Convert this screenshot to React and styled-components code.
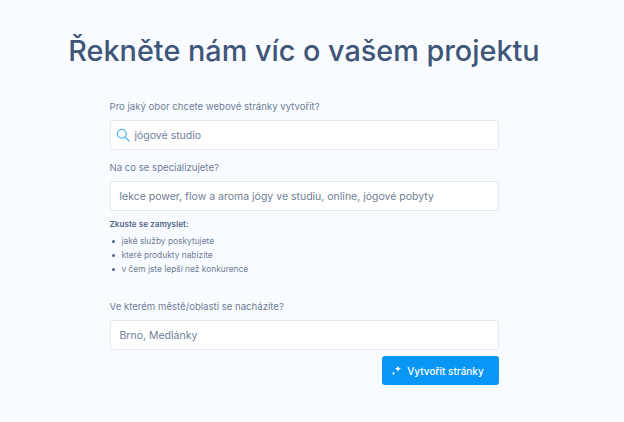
import React from "react";
import styled, { createGlobalStyle } from "styled-components";

const Global = createGlobalStyle`
  html, body { margin: 0; padding: 0; background: #f8fbff; }
  body { font-family: "Inter", "Lato", sans-serif; }
`;

const Page = styled.main`
  width: 624px;
  height: 422px;
  overflow: hidden;
  box-sizing: border-box;
  padding: 30px 16px 0 0;
  background: #f8fbff;
  display: flex;
  flex-direction: column;
  align-items: center;
`;

const Title = styled.h1`
  margin: 0 0 27px;
  font-size: 28.8px;
  line-height: 42px;
  font-weight: 500;
  color: #3f5679;
  white-space: nowrap;
`;

const Form = styled.form`
  width: 389px;
  display: flex;
  flex-direction: column;
`;

const Label = styled.label`
  display: block;
  height: 16px;
  line-height: 16px;
  font-size: 9.6px;
  color: #6f7e96;
  margin-bottom: 5px;
`;

const Field = styled.div`
  box-sizing: border-box;
  height: 30px;
  background: #fff;
  border: 1px solid #e4eaf3;
  border-radius: 3px;
  display: flex;
  align-items: center;
  gap: 5px;
  padding: 0 ${(p) => (p.$icon ? 5 : 9)}px;
  font-size: 10.5px;
  color: #6f7e96;
  margin-bottom: ${(p) => p.$after || 0}px;
`;

const Hint = styled.div`
  font-size: 8.2px;
  line-height: 12px;
  font-weight: 600;
  color: #55688a;
  margin: 7px 0 4px;
`;

const List = styled.ul`
  margin: 0 0 23px;
  padding: 0 0 0 12px;
  list-style: none;
`;

const Item = styled.li`
  position: relative;
  font-size: 8.4px;
  line-height: 14px;
  color: #6f7e96;
  &::before {
    content: "";
    position: absolute;
    left: -10px;
    top: 6px;
    width: 3px;
    height: 3px;
    border-radius: 50%;
    background: #4d628a;
  }
`;

const Actions = styled.div`
  display: flex;
  justify-content: flex-end;
  margin-top: 6px;
`;

const Button = styled.button`
  box-sizing: border-box;
  width: 117px;
  height: 29px;
  border: 0;
  border-radius: 3px;
  background: #0996f5;
  color: #fff;
  font: 500 10px "Inter", sans-serif;
  display: flex;
  align-items: center;
  justify-content: center;
  gap: 5px;
  padding: 0 5px 0 0;
`;

const SearchIcon = () => (
  <svg width="14" height="14" viewBox="0 0 14 14" fill="none" stroke="#55b4ef" strokeWidth="1.3" strokeLinecap="round">
    <circle cx="5.8" cy="5.8" r="4.4" />
    <path d="M9 9l4 4" />
  </svg>
);

const SparkIcon = () => (
  <svg width="11" height="11" viewBox="0 0 11 11" fill="#fff">
    <path d="M7 .5c.3 2 1.2 2.900 3.400 3.300C8.200 4.200 7.300 5.100 7 7.200 6.700 5.100 5.800 4.200 3.600 3.800 5.800 3.400 6.700 2.500 7 .5z" />
    <path d="M2.500 6.200c.2 1.300.7 1.800 2 2.100-1.300.3-1.800.8-2 2.100-.2-1.300-.7-1.800-2-2.100 1.300-.3 1.800-.8 2-2.100z" />
  </svg>
);

export default function App() {
  return (
    <Page>
      <Global />
      <Title>Řekněte nám víc o vašem projektu</Title>
      <Form onSubmit={(e) => e.preventDefault()}>
        <Label>Pro jaký obor chcete webové stránky vytvořit?</Label>
        <Field $icon $after={10}>
          <SearchIcon />
          jógové studio
        </Field>
        <Label>Na co se specializujete?</Label>
        <Field>lekce power, flow a aroma jógy ve studiu, online, jógové pobyty</Field>
        <Hint>Zkuste se zamyslet:</Hint>
        <List>
          <Item>jaké služby poskytujete</Item>
          <Item>které produkty nabízíte</Item>
          <Item>v čem jste lepší než konkurence</Item>
        </List>
        <Label>Ve kterém městě/oblasti se nacházíte?</Label>
        <Field>Brno, Medlánky</Field>
        <Actions>
          <Button type="button">
            <SparkIcon />
            Vytvořit stránky
          </Button>
        </Actions>
      </Form>
    </Page>
  );
}
